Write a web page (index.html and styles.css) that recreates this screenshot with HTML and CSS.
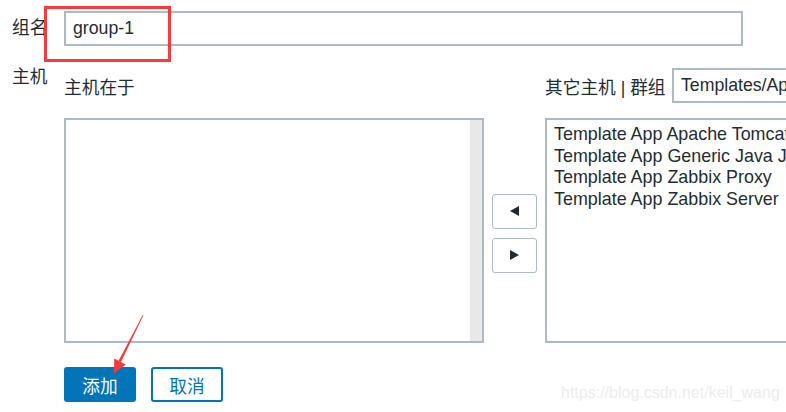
FILE: index.html
```html
<!DOCTYPE html>
<html lang="zh">
<head>
<meta charset="utf-8">
<title>主机群组</title>
<link rel="stylesheet" href="styles.css">
</head>
<body>
<form class="form">
  <div class="row row-name">
    <label class="label">组名</label>
    <div class="input">group-1</div>
  </div>
  <div class="row row-hosts">
    <label class="label label-top">主机</label>
    <div class="tween">
      <div class="head">主机在于</div>
      <div></div>
      <div class="head head-right">
        <span>其它主机 | 群组</span>
        <div class="select">Templates/Applications</div>
      </div>
      <div class="box box-left">
        <div class="box-body"></div>
        <div class="scrollbar"></div>
      </div>
      <div class="mid">
        <button type="button" class="arrow-btn"><span class="tri tri-left"></span></button>
        <button type="button" class="arrow-btn"><span class="tri tri-right"></span></button>
      </div>
      <div class="box box-right">
        <div class="opt">Template App Apache Tomcat JMX</div>
        <div class="opt">Template App Generic Java JMX</div>
        <div class="opt">Template App Zabbix Proxy</div>
        <div class="opt">Template App Zabbix Server</div>
      </div>
    </div>
  </div>
  <div class="actions">
    <button type="button" class="btn btn-primary">添加</button>
    <button type="button" class="btn btn-alt">取消</button>
  </div>
</form>
<svg class="annot" width="786" height="412" viewBox="0 0 786 412">
  <rect x="45.5" y="7.5" width="124" height="53" fill="none" stroke="#f73b3b" stroke-width="3"/>
  <polygon fill="#f73b3b" points="143.4,315.2 121,362 125.6,364.6 114,373.5 114.2,358.6 118.6,360.8 142.8,314.8"/>
</svg>
<div class="watermark">https://blog.csdn.net/keil_wang</div>
</body>
</html>
```
FILE: styles.css
```css
html, body {
  margin: 0;
  padding: 0;
  overflow: hidden;
  width: 786px;
  height: 412px;
  background: #ffffff;
}
body {
  position: relative;
  font-family: "Liberation Sans", Arial, "Noto Sans CJK SC", sans-serif;
  font-size: 17.7px;
  color: #1f2c33;
}
.form {
  padding: 11px 0 0 12px;
}
.row {
  display: flex;
}
.label {
  width: 52px;
  flex: none;
  line-height: 21px;
}
.row-name {
  align-items: center;
}
.input {
  width: 661px;
  height: 31px;
  border: 2px solid #acbbc2;
  padding: 0 7px;
  line-height: 31px;
}
.row-hosts {
  margin-top: 22px;
  align-items: flex-start;
}
.label-top {
  margin-top: -1px;
}
.tween {
  display: grid;
  grid-template-columns: 420px 61px 440px;
  grid-template-rows: 35px 225px;
  row-gap: 15px;
  flex: none;
}
.head {
  display: flex;
  align-items: center;
  white-space: nowrap;
}
.head-right span {
  width: 127px;
  flex: none;
}
.select {
  height: 31px;
  line-height: 31px;
  border: 2px solid #acbbc2;
  padding: 0 7px;
  width: 300px;
  flex: none;
}
.box {
  border: 2px solid #acbbc2;
  box-sizing: border-box;
}
.box-left {
  display: flex;
}
.box-body {
  flex: 1;
}
.scrollbar {
  width: 12px;
  background: #e8e8e8;
}
.box-right {
  padding: 4px 7px;
  line-height: 21.6px;
  font-size: 17.9px;
  white-space: nowrap;
}
.mid {
  display: flex;
  flex-direction: column;
  align-items: center;
  justify-content: center;
  gap: 9px;
  padding-top: 5px;
}
.arrow-btn {
  width: 45px;
  height: 35px;
  border: 1.5px solid #acbbc2;
  border-radius: 3px;
  background: #ffffff;
  padding: 0;
  display: flex;
  align-items: center;
  justify-content: center;
}
.tri {
  width: 0;
  height: 0;
  border-top: 5.5px solid transparent;
  border-bottom: 5.5px solid transparent;
}
.tri-left {
  border-right: 9px solid #1f2c33;
}
.tri-right {
  border-left: 9px solid #1f2c33;
}
.actions {
  display: flex;
  gap: 15px;
  margin: 24px 0 0 52px;
}
.btn {
  width: 72px;
  height: 35px;
  border-radius: 3px;
  font-family: "Liberation Sans", "Noto Sans CJK SC", sans-serif;
  font-size: 17.7px;
  padding: 0;
  box-sizing: border-box;
}
.btn-primary {
  background: #0275b8;
  color: #ffffff;
  border: none;
}
.btn-alt {
  background: #ffffff;
  color: #0275b8;
  border: 2px solid #0275b8;
}
.annot {
  position: absolute;
  left: 0;
  top: 0;
  pointer-events: none;
}
.watermark {
  position: absolute;
  left: 561px;
  top: 384px;
  font-size: 16px;
  color: #ececec;
  white-space: nowrap;
}
```
